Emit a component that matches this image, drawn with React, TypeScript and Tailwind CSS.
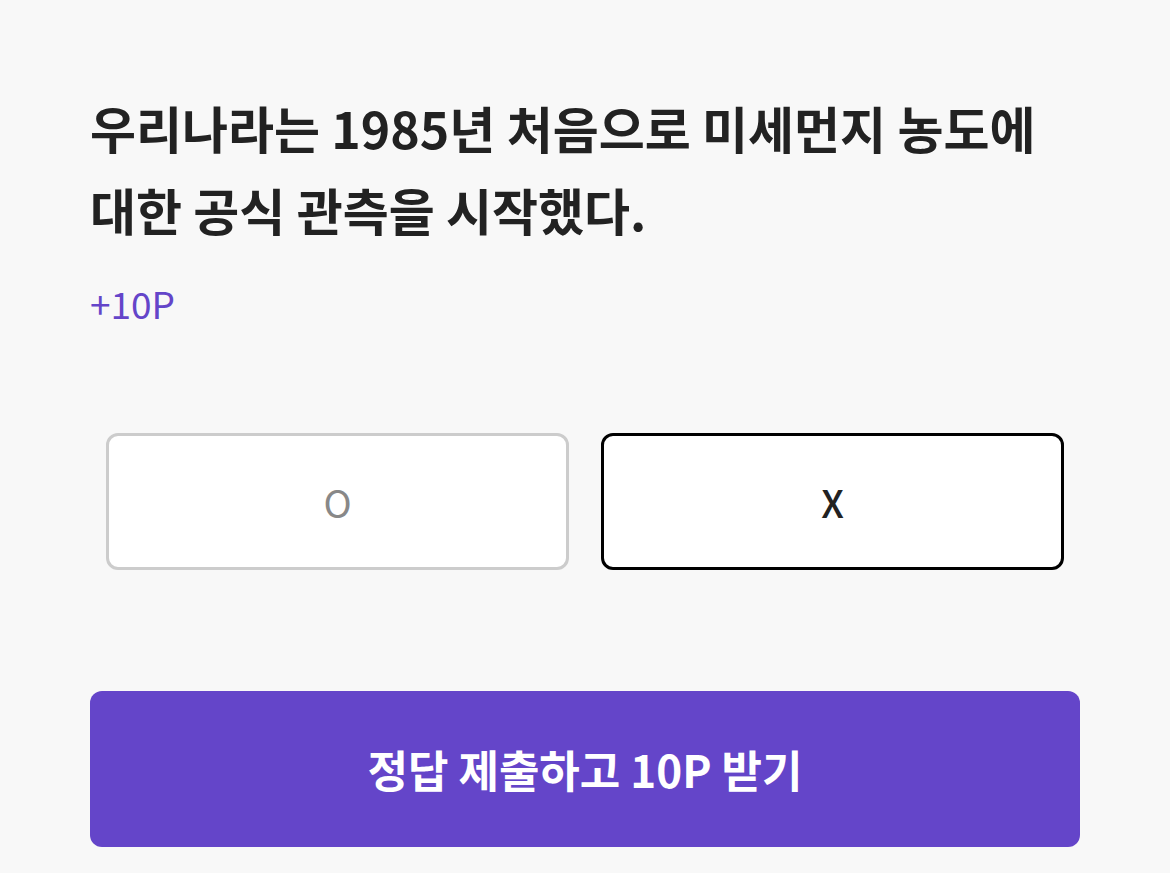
import React, { useState } from 'react'

export default function App() {
  const [answer, setAnswer] = useState<'O' | 'X' | null>('X')

  return (
    <div
      className="min-h-[873px] w-full bg-[#f8f8f8] px-[90px] pt-[86px]"
      style={{ fontFamily: '"Noto Sans CJK KR", "Noto Sans", sans-serif' }}
    >
      <h1 className="text-[50px] font-bold leading-[82px] tracking-[0px] text-[#222222]">
        우리나라는 1985년 처음으로 미세먼지 농도에
        <br />
        대한 공식 관측을 시작했다.
      </h1>
      <p className="mt-[28px] text-[37px] leading-[50px] text-[#6445c9]">+10P</p>

      <div className="mt-[105px] grid grid-cols-2 gap-[32px] px-[16px]">
        {(['O', 'X'] as const).map((opt) => (
          <button
            key={opt}
            onClick={() => setAnswer(opt)}
            className={`flex h-[137px] items-center justify-center rounded-[12px] border-[3px] bg-white text-[38px] ${
              answer === opt ? 'border-black font-medium text-[#222222]' : 'border-[#cccccc] text-[#888888]'
            }`}
          >
            {opt}
          </button>
        ))}
      </div>

      <button className="mt-[121px] flex h-[156px] w-full items-center justify-center rounded-[12px] bg-[#6445c9] text-[44px] font-bold text-white">
        정답 제출하고 10P 받기
      </button>
    </div>
  )
}
